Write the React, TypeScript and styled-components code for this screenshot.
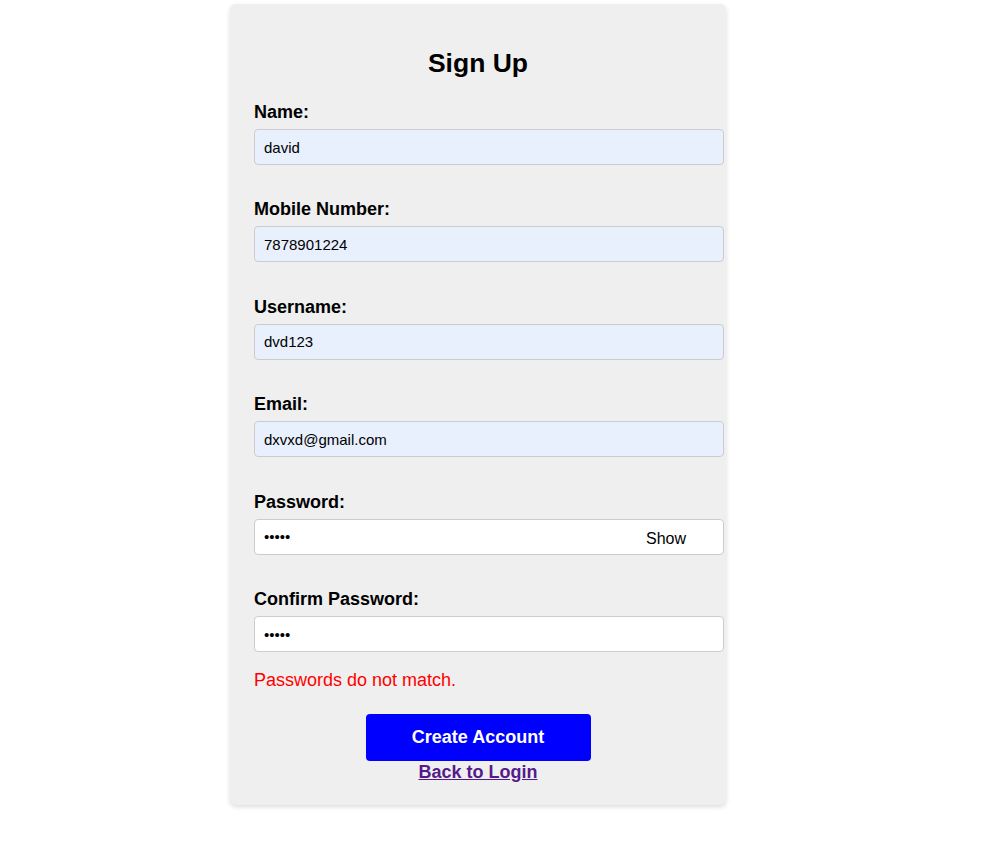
import React from "react";
import styled, { createGlobalStyle } from "styled-components";

const GlobalStyle = createGlobalStyle`
  html, body {
    margin: 0;
    padding: 0;
    background: #ffffff;
    font-family: "Liberation Sans", Arial, sans-serif;
  }
`;

const Page = styled.div`
  display: flex;
  justify-content: flex-start;
  padding: 4px 0 38px 230px;
`;

const Card = styled.div`
  width: 496px;
  box-sizing: border-box;
  background: #efefef;
  border-radius: 6px;
  box-shadow: 0 2px 5px rgba(0, 0, 0, 0.14);
  padding: 44px 24px 22px 24px;
  display: flex;
  flex-direction: column;
`;

const Title = styled.h2`
  margin: 0 0 24px 0;
  font-size: 26.5px;
  line-height: 30px;
  font-weight: bold;
  text-align: center;
  color: #000;
`;

const Form = styled.form`
  display: flex;
  flex-direction: column;
  gap: 34.45px;
`;

const Field = styled.div`
  display: flex;
  flex-direction: column;
`;

const Label = styled.label`
  font-size: 18px;
  font-weight: bold;
  color: #000;
  margin-bottom: 6px;
`;

const InputWrap = styled.div`
  position: relative;
  width: calc(100% + 22px);
`;

const Input = styled.input<{ $filled?: boolean }>`
  width: 100%;
  height: 36px;
  box-sizing: border-box;
  padding: 0 9px;
  font-family: "Liberation Sans", Arial, sans-serif;
  font-size: 15px;
  color: #000;
  background: ${(p) => (p.$filled ? "#e8f0fe" : "#ffffff")};
  border: 1px solid #cccccc;
  border-radius: 4px;
  outline: none;
`;

const ShowButton = styled.button`
  position: absolute;
  right: 38px;
  top: 50%;
  transform: translateY(-50%);
  margin-top: 2px;
  padding: 0;
  border: none;
  background: transparent;
  font-family: "Liberation Sans", Arial, sans-serif;
  font-size: 16px;
  color: #000;
  cursor: pointer;
`;

const ErrorText = styled.p`
  margin: 18px 0 0 0;
  font-size: 18px;
  color: #ff0000;
`;

const Actions = styled.div`
  display: flex;
  flex-direction: column;
  align-items: center;
  margin-top: 23px;
`;

const SubmitButton = styled.button`
  width: 225px;
  height: 47px;
  border: none;
  border-radius: 4px;
  background: #0000ff;
  color: #ffffff;
  font-family: "Liberation Sans", Arial, sans-serif;
  font-size: 18px;
  font-weight: bold;
  cursor: pointer;
`;

const BackLink = styled.a`
  margin-top: 1px;
  font-size: 18px;
  font-weight: bold;
  color: #551a8b;
  text-decoration: underline;
`;

const fields = [
  { label: "Name:", value: "david", type: "text" },
  { label: "Mobile Number:", value: "7878901224", type: "text" },
  { label: "Username:", value: "dvd123", type: "text" },
  { label: "Email:", value: "dxvxd@gmail.com", type: "email" },
];

export default function App() {
  return (
    <>
      <GlobalStyle />
      <Page>
        <Card>
          <Title>Sign Up</Title>
          <Form onSubmit={(e) => e.preventDefault()}>
            {fields.map((f) => (
              <Field key={f.label}>
                <Label>{f.label}</Label>
                <InputWrap>
                  <Input $filled type={f.type} defaultValue={f.value} />
                </InputWrap>
              </Field>
            ))}
            <Field>
              <Label>Password:</Label>
              <InputWrap>
                <Input type="password" defaultValue="12345" />
                <ShowButton type="button">Show</ShowButton>
              </InputWrap>
            </Field>
            <Field>
              <Label>Confirm Password:</Label>
              <InputWrap>
                <Input type="password" defaultValue="12346" />
              </InputWrap>
            </Field>
          </Form>
          <ErrorText>Passwords do not match.</ErrorText>
          <Actions>
            <SubmitButton type="button">Create Account</SubmitButton>
            <BackLink href="#">Back to Login</BackLink>
          </Actions>
        </Card>
      </Page>
    </>
  );
}
